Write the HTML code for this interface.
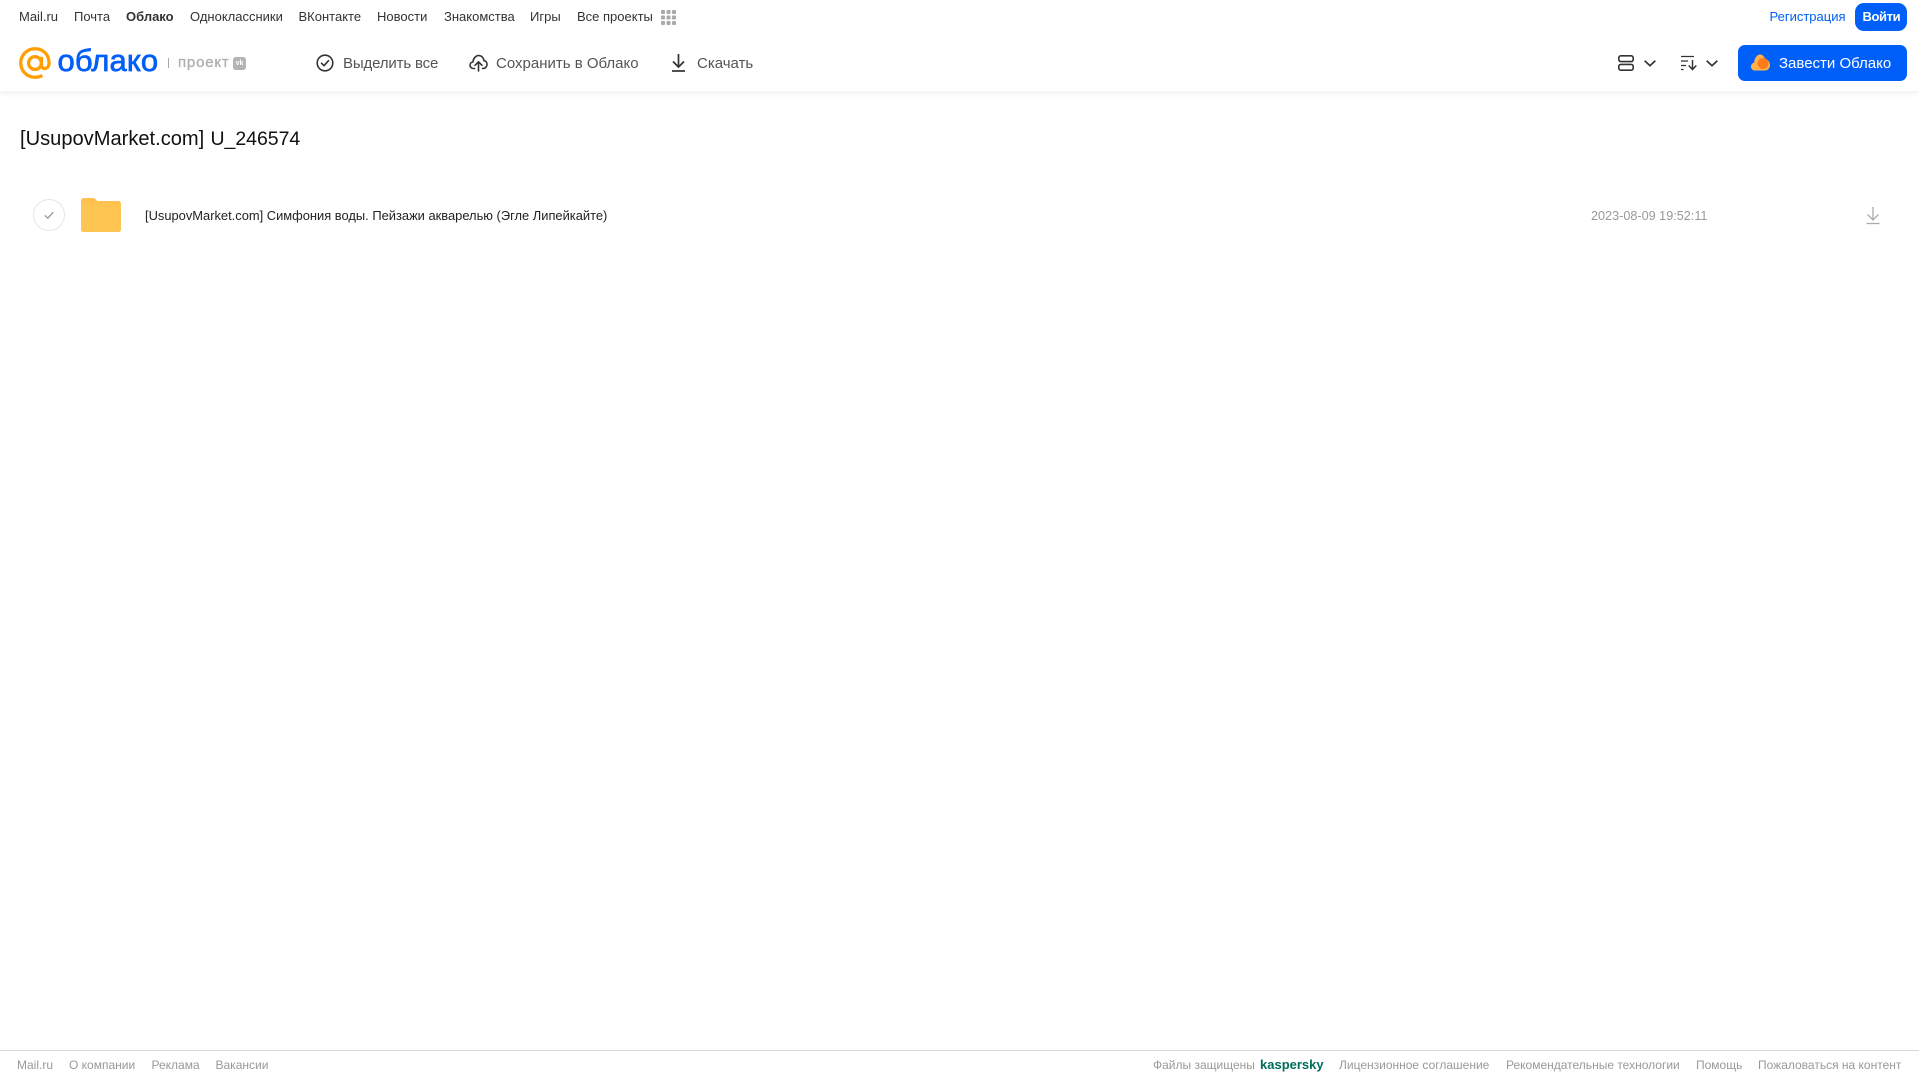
<!DOCTYPE html>
<html lang="ru"><head><meta charset="utf-8"><title>Облако</title>
<style>
html,body{margin:0;padding:0;background:#fff;width:1919px;height:1079px;overflow:hidden}
body{font-family:"Liberation Sans",sans-serif;position:relative}
.t{position:absolute;white-space:nowrap;line-height:20px;height:20px}
.n{top:7px;font-size:13px;color:#333}
.a{top:53.5px;font-size:15px;color:#555}
.f{top:1055px;font-size:12px;color:#999}
svg{position:absolute;overflow:visible}
.hdr{position:absolute;left:0;top:0;width:1919px;height:91px;background:#fff;box-shadow:0 2px 6px rgba(0,0,0,.07)}
</style></head><body>
<div class="hdr"></div>
<span class="t n" style="left:19px">Mail.ru</span>
<span class="t n" style="left:74px">Почта</span>
<span class="t n" style="left:126px;font-weight:bold">Облако</span>
<span class="t n" style="left:190px">Одноклассники</span>
<span class="t n" style="left:298.500px">ВКонтакте</span>
<span class="t n" style="left:377px">Новости</span>
<span class="t n" style="left:444px">Знакомства</span>
<span class="t n" style="left:530px">Игры</span>
<span class="t n" style="left:577px">Все проекты</span>
<svg style="left:661px;top:10px" width="15" height="15" fill="#aaa"><rect x="0" y="0" width="4" height="4" rx="1"/><rect x="5.500" y="0" width="4" height="4" rx="1"/><rect x="11" y="0" width="4" height="4" rx="1"/><rect x="0" y="5.500" width="4" height="4" rx="1"/><rect x="5.500" y="5.500" width="4" height="4" rx="1"/><rect x="11" y="5.500" width="4" height="4" rx="1"/><rect x="0" y="11" width="4" height="4" rx="1"/><rect x="5.500" y="11" width="4" height="4" rx="1"/><rect x="11" y="11" width="4" height="4" rx="1"/></svg>
<span class="t n" style="left:1769.500px;color:#005ff9">Регистрация</span>
<div style="position:absolute;left:1855px;top:3px;width:52px;height:28px;border-radius:9px;background:#005ff9"></div>
<span class="t n" style="left:1862.500px;color:#fff;font-weight:bold;letter-spacing:-.4px">Войти</span>

<svg style="left:19px;top:47px" width="32" height="32" viewBox="0 0 33 33" fill="none" stroke="#ff9e00" stroke-width="3.400"><circle cx="16.500" cy="16.500" r="6.600"/><path d="M23.100 10v8.500c0 5.200 7.600 5.200 7.900-1.500C31.300 8 25 1.800 16.500 1.800 8.300 1.800 1.800 8.300 1.800 16.500s6.500 14.700 14.700 14.700c3 0 5.300-.6 7.500-1.900"/></svg>
<span style="position:absolute;left:57.500px;top:42px;height:38px;line-height:38px;font-size:31px;color:#005ff9;white-space:nowrap;-webkit-text-stroke:.7px #005ff9;letter-spacing:.1px">облако</span>
<div style="position:absolute;left:168px;top:58px;width:1px;height:10px;background:#aaa"></div>
<span class="t" style="left:178px;top:53px;font-size:15px;color:#aeaeae;letter-spacing:.8px;-webkit-text-stroke:.3px #aeaeae">проект</span>
<div style="position:absolute;left:233px;top:57px;width:13px;height:13px;border-radius:3px;background:#b3b3b3;color:#fff;font-size:7px;font-weight:bold;line-height:13px;text-align:center">vk</div>

<svg style="left:316px;top:54px" width="18" height="18" viewBox="0 0 18 18" fill="none" stroke="#333" stroke-width="1.600"><circle cx="9" cy="9" r="7.800"/><path d="M5.500 9.200l2.500 2.500 4.500-5" stroke-linecap="round" stroke-linejoin="round"/></svg>
<span class="t a" style="left:343px;letter-spacing:-.15px">Выделить все</span>
<svg style="left:469px;top:54px" width="19" height="18" viewBox="0 0 19 18" fill="none" stroke="#333" stroke-width="1.600" stroke-linecap="round" stroke-linejoin="round"><path d="M5.500 14.500H4.500C2.500 14.500 1 13 1 11.200c0-1.700 1.200-3 2.900-3.200C4.300 4.500 6.700 1.500 9.700 1.500c2.900 0 5 2.300 5.300 5.200 2 .3 3.200 2 3 3.900-.2 2.100-1.700 3.900-3.700 3.900h-.8"/><path d="M9.500 17V8M6 11.300l3.500-3.500 3.500 3.500"/></svg>
<span class="t a" style="left:496px">Сохранить в Облако</span>
<svg style="left:671px;top:54px" width="15" height="18" viewBox="0 0 15 18" fill="none" stroke="#333" stroke-width="1.700"><path d="M7.500 0v12.500M2 7.500l5.500 5.500L13 7.500"/><path d="M1 17h13"/></svg>
<span class="t a" style="left:697px;letter-spacing:0">Скачать</span>

<svg style="left:1618px;top:55px" width="16" height="16" viewBox="0 0 16 16" fill="none" stroke="#333" stroke-width="1.600"><rect x=".8" y=".8" width="14.400" height="5.800" rx="2"/><rect x=".8" y="9.400" width="14.400" height="5.800" rx="2"/></svg>
<svg style="left:1644px;top:60px" width="12" height="7" viewBox="0 0 12 7" fill="none" stroke="#333" stroke-width="1.700"><path d="M.7.700L6 5.700 11.300.700"/></svg>
<svg style="left:1681px;top:55px" width="17" height="16" viewBox="0 0 17 16" fill="none" stroke="#333" stroke-width="1.300"><path d="M0 1.500h13M0 6h7M0 10.500h5M0 14.500h2.500"/><path d="M11.500 5v9.500M7.700 10.500l3.800 4 3.800-4" stroke-width="1.500"/></svg>
<svg style="left:1706px;top:60px" width="12" height="7" viewBox="0 0 12 7" fill="none" stroke="#333" stroke-width="1.700"><path d="M.7.700L6 5.700 11.300.700"/></svg>

<div style="position:absolute;left:1738px;top:45px;width:169px;height:36px;border-radius:7px;background:#005ff9"></div>
<svg style="left:1751px;top:54px" width="19" height="17" viewBox="0 0 19 17"><path d="M4 16.500C1.500 16.500 0 14.700 0 12.600c0-2 1.400-3.700 3.200-4C3.600 3.500 6.500 .5 9 .5c2.500 0 4.500 2 5 4.500 2.800.3 5 3 5 6 0 3-2.200 5.500-5 5.500z" fill="#ffb347"/><circle cx="12" cy="9.500" r="5.500" fill="#ff7a1a"/></svg>
<span class="t a" style="left:1779px;color:#fff">Завести Облако</span>

<span class="t" style="left:20px;top:127px;height:24px;line-height:24px;font-size:20.100px;color:#111">[UsupovMarket.com]</span>
<span class="t" style="left:210.500px;top:127px;height:24px;line-height:24px;font-size:19.450px;color:#111">U_246574</span>

<svg style="left:33px;top:199px" width="32" height="32" viewBox="0 0 32 32" fill="none"><circle cx="16" cy="16" r="15.500" stroke="#e6e6e6"/><path d="M11.800 16.300l3 2.900 5.400-6" stroke="#999" stroke-width="1.300"/></svg>
<svg style="left:81px;top:198px" width="40" height="34" viewBox="0 0 40 34"><path d="M3 0h9c2 0 3 1 4 2.500L17 4H2V3c0-2 0-3 1-3z" fill="#ffcf70"/><path d="M0 3C0 1 1 0 3 0h8c2 0 3 1 4 3h22c2 0 3 1 3 3v25c0 2-1 3-3 3H3c-2 0-3-1-3-3z" fill="#ffc14d"/><path d="M0 6h40v25c0 2-1 3-3 3H3c-2 0-3-1-3-3z" fill="#ffc552"/></svg>
<span class="t" style="left:145px;top:205.500px;font-size:12.900px;color:#222">[UsupovMarket.com] Симфония воды. Пейзажи акварелью (Эгле Липейкайте)</span>
<span class="t" style="left:1591px;top:205.500px;font-size:12.650px;color:#999">2023-08-09 19:52:11</span>
<svg style="left:1866px;top:207px" width="14" height="18" viewBox="0 0 14 18" fill="none" stroke="#aaa" stroke-width="1.300"><path d="M7 0v13M1.500 7.500L7 13l5.500-5.500"/><path d="M.5 16.500h13"/></svg>

<div style="position:absolute;left:0;top:1050px;width:1919px;height:1px;background:#d9d9d9"></div>
<span class="t f" style="left:17px">Mail.ru</span>
<span class="t f" style="left:69px">О компании</span>
<span class="t f" style="left:151.500px">Реклама</span>
<span class="t f" style="left:215.500px">Вакансии</span>
<span class="t f" style="left:1153px">Файлы защищены</span>
<span class="t f" style="left:1260px;font-size:13px;font-weight:bold;color:#006d5c">kaspersky</span>
<span class="t f" style="left:1339px">Лицензионное соглашение</span>
<span class="t f" style="left:1506px">Рекомендательные технологии</span>
<span class="t f" style="left:1696px">Помощь</span>
<span class="t f" style="left:1758px">Пожаловаться на контент</span>
</body></html>
